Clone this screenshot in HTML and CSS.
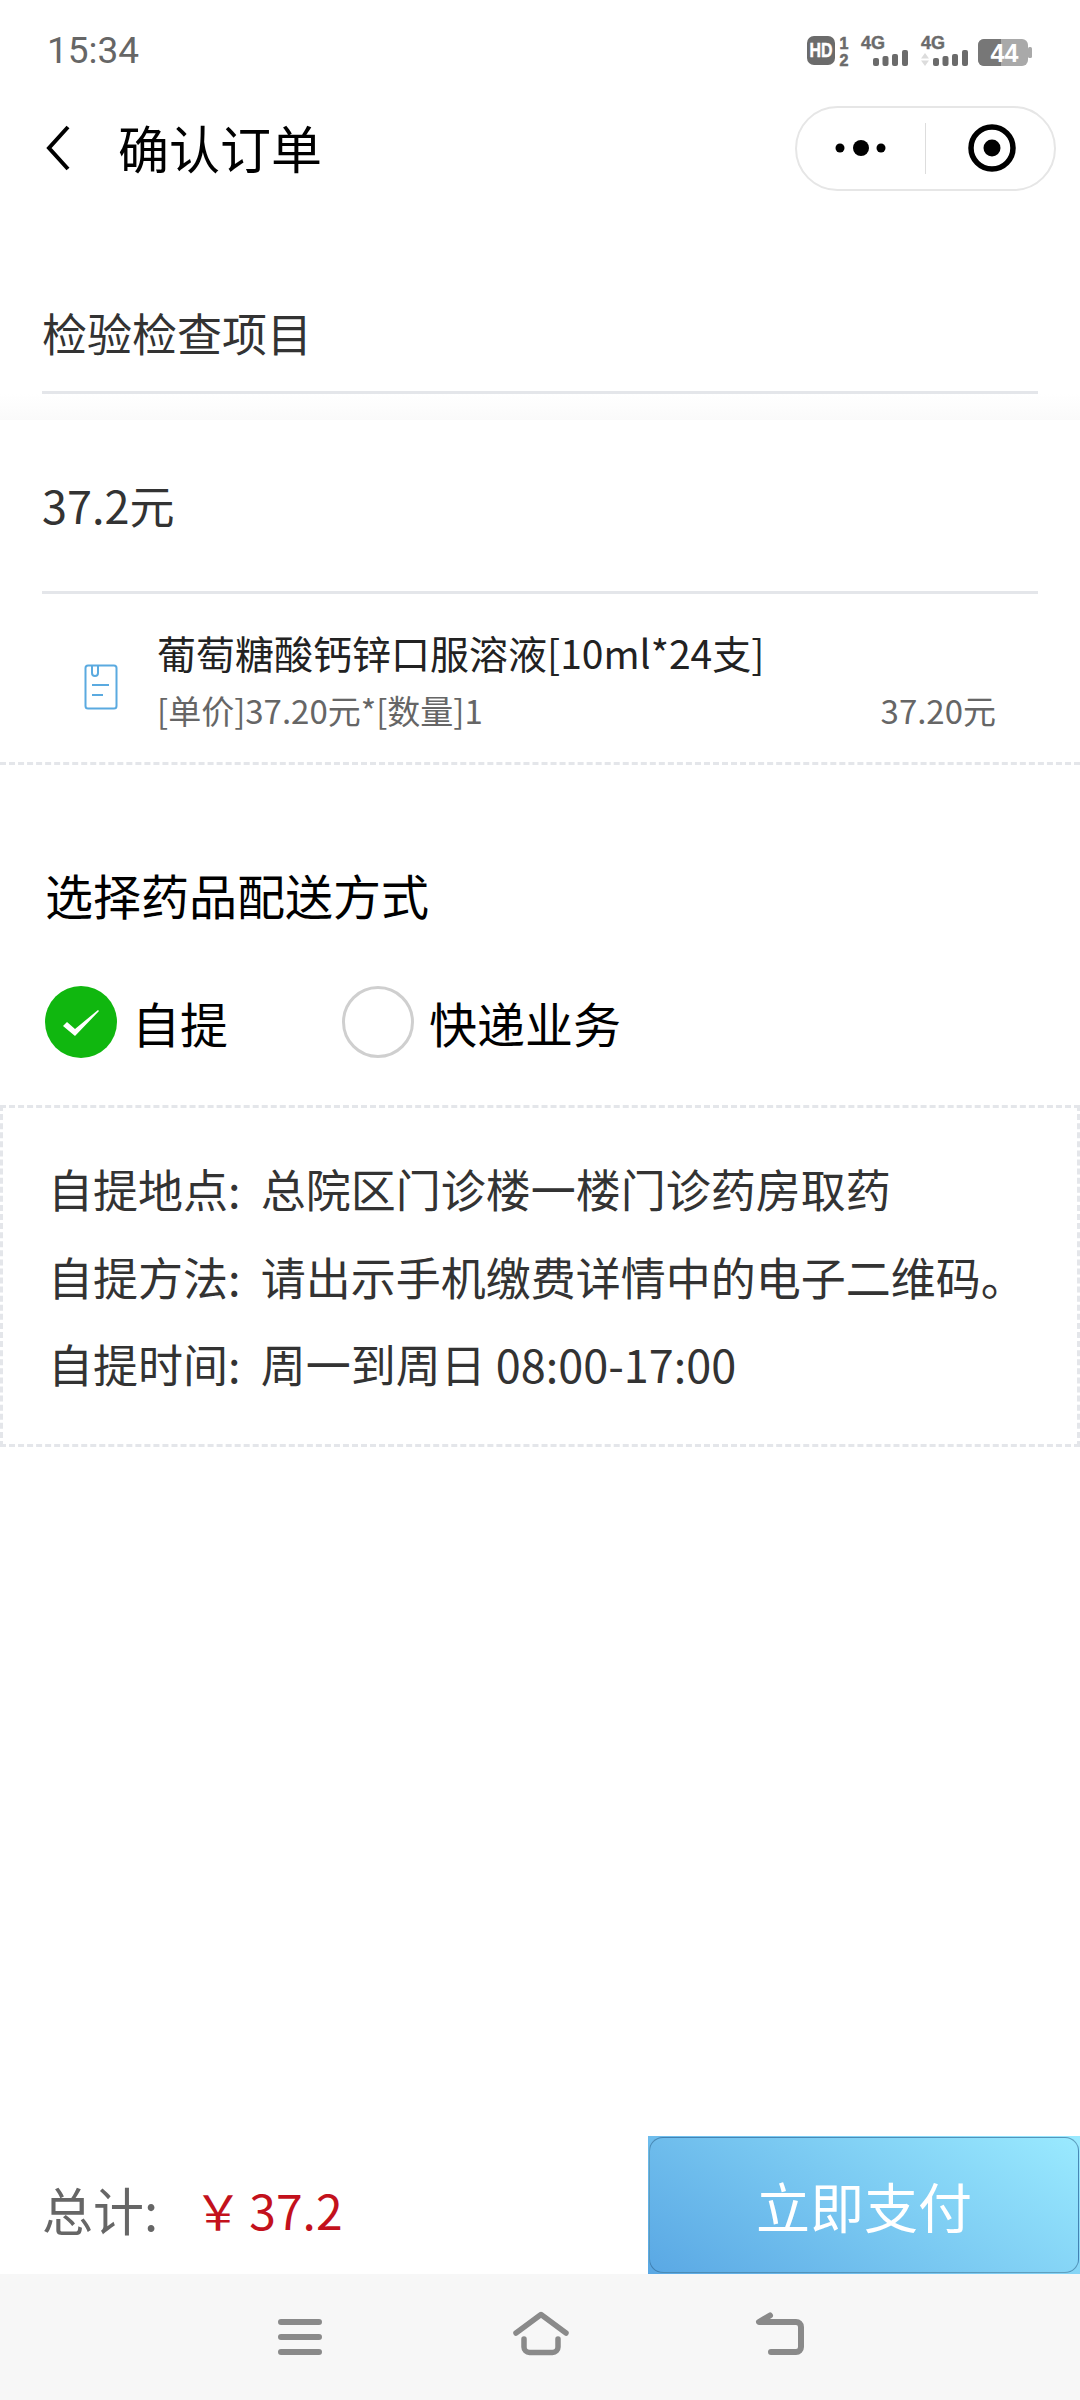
FILE: index.html
```html
<!DOCTYPE html>
<html lang="zh-CN">
<head>
<meta charset="utf-8">
<title>确认订单</title>
<link rel="stylesheet" href="styles.css">
</head>
<body>
<div class="page">
  <header class="status">
    <span class="time">15:34</span>
    <svg class="status-icons" width="230" height="54" viewBox="0 -10 230 54">
      <rect x="0" y="2" width="28" height="29" rx="7" fill="#6b6b6b"/>
      <text x="14" y="23" class="si-hd" textLength="23" lengthAdjust="spacingAndGlyphs">HD</text>
      <text x="37" y="15" class="si-sm">1</text>
      <text x="37" y="32" class="si-sm">2</text>
      <text x="54" y="15" class="si-4g" textLength="24" lengthAdjust="spacingAndGlyphs">4G</text>
      <g fill="#6b6b6b">
        <rect x="66" y="24" width="6" height="8" rx="2"/><rect x="75.500" y="22" width="6" height="10" rx="2"/><rect x="85" y="20" width="6" height="12" rx="2"/><rect x="95" y="16" width="6" height="16" rx="2"/>
        <rect x="126" y="24" width="6" height="8" rx="2"/><rect x="135.500" y="22" width="6" height="10" rx="2"/><rect x="145" y="20" width="6" height="12" rx="2"/><rect x="155" y="16" width="6" height="16" rx="2"/>
      </g>
      <text x="114" y="15" class="si-4g" textLength="24" lengthAdjust="spacingAndGlyphs">4G</text>
      <path d="M118 19l4 5.500h-8zM118 32l-4-5.500h8z" fill="#dcdcdc"/>
      <rect x="171" y="5" width="50" height="27" rx="6" fill="#a9a9a9"/>
      <path d="M177 5h17v27h-17a6 6 0 0 1-6-6v-15a6 6 0 0 1 6-6z" fill="#777"/>
      <rect x="221" y="13" width="4" height="11" rx="1.500" fill="#a9a9a9"/>
      <text x="197.500" y="28" class="si-batt">44</text>
    </svg>
  </header>

  <nav class="navbar">
    <svg class="back" width="24" height="46" viewBox="0 0 24 46"><path d="M22 2L3 23l19 21" fill="none" stroke="#000" stroke-width="4"/></svg>
    <h1 class="title">确认订单</h1>
    <div class="capsule">
      <svg class="capsule-dots" width="54" height="18" viewBox="0 0 54 18"><circle cx="6" cy="9" r="4.500"/><circle cx="27" cy="9" r="8"/><circle cx="47" cy="9" r="4.500"/></svg>
      <span class="capsule-sep"></span>
      <svg class="capsule-target" width="48" height="48" viewBox="0 0 48 48"><circle cx="24" cy="24" r="21" fill="none" stroke="#000" stroke-width="5.500"/><circle cx="24" cy="24" r="8.500"/></svg>
    </div>
  </nav>

  <section class="heading-row"><span>检验检查项目</span></section>
  <div class="fade-band"></div>
  <section class="amount-row"><span>37.2元</span></section>

  <section class="item">
    <svg class="item-icon" width="34" height="46" viewBox="0 0 34 46">
      <rect x="1.500" y="1.500" width="31" height="43" rx="2.500" fill="none" stroke="#5aaae0" stroke-width="2"/>
      <path d="M8 2v7a3 3 0 0 0 6 0V2" fill="none" stroke="#5aaae0" stroke-width="2"/>
      <path d="M8 21h17M8 31h11" fill="none" stroke="#5aaae0" stroke-width="2"/>
    </svg>
    <div class="item-body">
      <div class="item-name">葡萄糖酸钙锌口服溶液[10ml*24支]</div>
      <div class="item-meta"><span>[单价]37.20元*[数量]1</span><span>37.20元</span></div>
    </div>
  </section>

  <h2 class="delivery-title">选择药品配送方式</h2>
  <div class="options">
    <label class="option">
      <svg class="radio" width="72" height="72" viewBox="0 0 72 72"><circle cx="36" cy="36" r="36" fill="#10b70f"/><path d="M18 40l4-4 8 7 23-19 1 1-24 25z" fill="#fff"/></svg>
      <span>自提</span>
    </label>
    <label class="option">
      <span class="radio-empty"></span>
      <span>快递业务</span>
    </label>
  </div>

  <section class="pickup">
    <p>自提地点:&nbsp; 总院区门诊楼一楼门诊药房取药</p>
    <p>自提方法:&nbsp; 请出示手机缴费详情中的电子二维码。</p>
    <p>自提时间:&nbsp; 周一到周日 08:00-17:00</p>
  </section>

  <div class="spacer"></div>

  <footer class="paybar">
    <div class="total"><span class="total-label">总计:</span><span class="total-value">￥ 37.2</span></div>
    <div class="pay-outer"><button class="pay-btn">立即支付</button></div>
  </footer>

  <div class="sysnav">
    <svg width="50" height="46" viewBox="0 0 50 46"><path d="M6 11h38M6 26h38M6 41h38" fill="none" stroke="#8a8a8a" stroke-width="6" stroke-linecap="round"/></svg>
    <svg width="62" height="46" viewBox="0 0 62 46"><path d="M6 22L31 3.500 56 22M14 28v8a5.500 5.500 0 0 0 5.500 5.500h23a5.500 5.500 0 0 0 5.500-5.500v-8" fill="none" stroke="#8a8a8a" stroke-width="5.500" stroke-linecap="round" stroke-linejoin="round"/></svg>
    <svg width="54" height="46" viewBox="0 0 54 46"><path d="M16 4.500L5 11h37a5 5 0 0 1 5 5v20a5 5 0 0 1-5 5H17" fill="none" stroke="#8a8a8a" stroke-width="6" stroke-linecap="round" stroke-linejoin="round"/></svg>
  </div>
</div>
</body>
</html>
```

FILE: styles.css
```css
* { box-sizing: border-box; }
html, body { margin: 0; padding: 0; background: #fff; }
body { font-family: "Noto Sans CJK SC", "Noto Sans", sans-serif; color: #333; }
.page { width: 1080px; height: 2400px; display: flex; flex-direction: column; overflow: hidden; }

.status { height: 96px; padding: 5px 43px 0 47px; display: flex; align-items: center; justify-content: space-between; }
.time { font-family: Roboto, sans-serif; font-size: 37px; color: #666; }
.si-hd { font: 700 21px "Liberation Sans", sans-serif; fill: #fff; text-anchor: middle; stroke: #fff; stroke-width: .5px; }
.si-sm { font: 700 16px "Liberation Sans", sans-serif; fill: #6b6b6b; text-anchor: middle; stroke: #6b6b6b; stroke-width: .6px; }
.si-4g { font: 700 18px "Liberation Sans", sans-serif; fill: #6b6b6b; stroke: #6b6b6b; stroke-width: .4px; }
.si-batt { font: 700 25px "Liberation Sans", sans-serif; fill: #fff; text-anchor: middle; }

.navbar { height: 104px; padding: 0 24px 0 46px; display: flex; align-items: center; }
.back { flex: none; }
.title { margin: 0 0 0 48px; font-size: 51px; font-weight: 400; color: #000; line-height: 66px; flex: 1; position: relative; top: -1px; }
.capsule { width: 261px; height: 85px; border: 2px solid #e6e6e6; border-radius: 43px; display: flex; align-items: center; padding-left: 37px; }
.capsule-dots { flex: none; }
.capsule-sep { width: 1px; height: 51px; background: #ddd; margin-left: 37px; }
.capsule-target { flex: none; margin-left: 42px; }

.heading-row { height: 194px; margin: 0 42px; padding-top: 100px; border-bottom: 3px solid #e4e6ea; font-size: 45px; line-height: 66px; }
.fade-band { height: 26px; background: linear-gradient(#fff, #fafafa); }
.amount-row { height: 174px; margin: 0 42px; padding-top: 52px; border-bottom: 3px solid #e4e6ea; font-size: 45px; line-height: 66px; }

.item { height: 171px; border-bottom: 3px dashed #e4e6ea; display: flex; align-items: center; padding: 0 84px 0 84px; }
.item-icon { flex: none; margin-top: 18px; }
.item-body { flex: 1; margin-left: 39px; }
.item-name { font-size: 39px; line-height: 56px; color: #222; margin-top: 0; }
.item-meta { display: flex; justify-content: space-between; font-size: 33px; line-height: 44px; color: #666; margin-top: 8px; }

.delivery-title { margin: 96px 0 0 45px; font-size: 48px; line-height: 66px; font-weight: 400; color: #000; }
.options { display: flex; margin: 59px 0 0 45px; gap: 114px; }
.option { display: flex; align-items: center; gap: 15px; font-size: 48px; color: #000; line-height: 72px; }
.radio { flex: none; }
.radio-empty { width: 72px; height: 72px; border: 3px solid #cfcfcf; border-radius: 50%; flex: none; }

.pickup { margin-top: 47px; height: 342px; border: 3px dashed #e4e6ea; padding: 37px 0 0 45px; font-size: 45px; line-height: 87.500px; }
.pickup p { margin: 0; }

.spacer { flex: 1; }
.paybar { height: 138px; display: flex; align-items: stretch; justify-content: space-between; }
.total { padding: 40px 0 0 42px; line-height: 66px; display: flex; }
.total-label { color: #666; width: 152px; font-size: 51px; }
.total-value { color: #c3111c; white-space: pre; font-size: 48px; word-spacing: -3.500px; }
.pay-outer { width: 432px; padding: 1px; background: linear-gradient(35deg, #5aa8e4, #9aeaff); }
.pay-btn { display: block; width: 100%; height: 100%; padding: 0; border: 1px solid rgba(40, 90, 130, .5); border-radius: 14px; background: linear-gradient(35deg, #5aa8e4, #9aeaff); color: #fff; font-family: inherit; font-size: 54px; }

.sysnav { height: 126px; background: #f7f7f7; display: flex; align-items: flex-start; padding: 37px 0 0 275px; }
.sysnav svg { flex: none; }
.sysnav svg:nth-child(2) { margin-left: 185px; }
.sysnav svg:nth-child(3) { margin-left: 182px; }
```
